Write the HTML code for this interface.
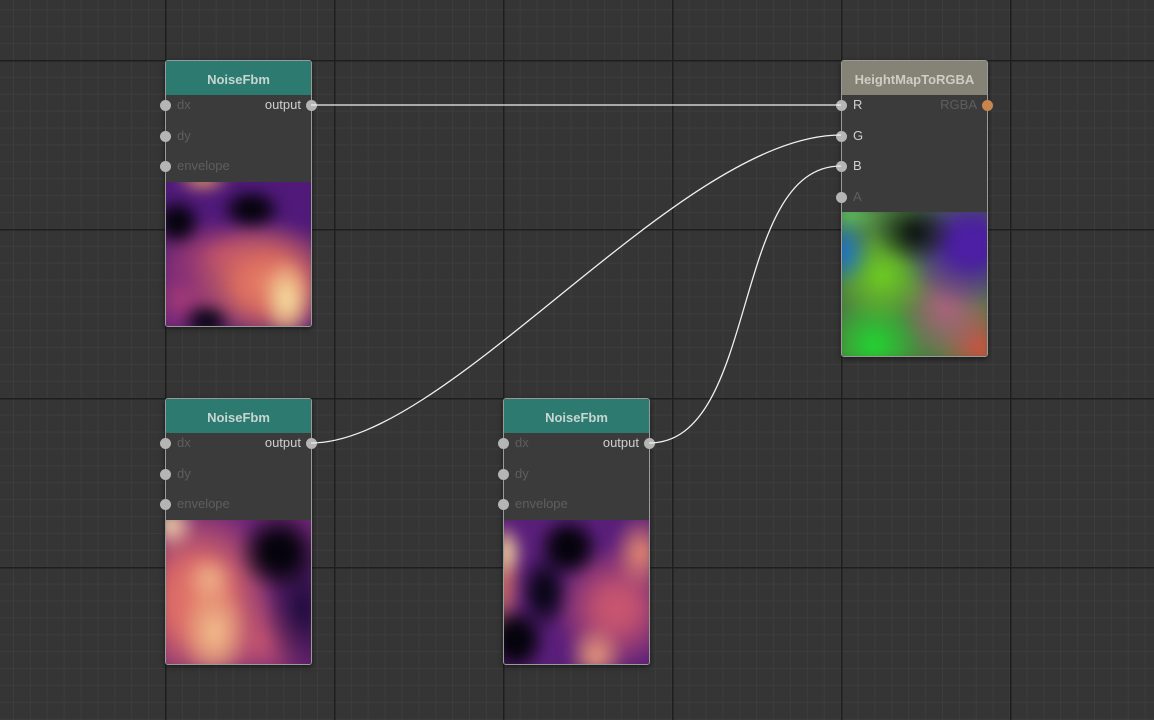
<!DOCTYPE html><html><head><style>
*{margin:0;padding:0;box-sizing:border-box}
body{width:1154px;height:720px;overflow:hidden;background:#353535;font-family:"Liberation Sans",sans-serif;position:relative}
.gmin{position:absolute;inset:0;background-image:linear-gradient(to right,#3d3d3d 1px,transparent 1px),linear-gradient(to bottom,#3d3d3d 1px,transparent 1px);background-size:16.9px 16.9px;background-position:165px 60px}
.gmaj{position:absolute;inset:0;background-image:linear-gradient(to right,#1e1e1e 1.5px,transparent 1.5px),linear-gradient(to bottom,#1e1e1e 1.5px,transparent 1.5px);background-size:169px 169px;background-position:165px 60px}
.node{position:absolute;width:147px;height:267px;border:1px solid #9a9a9a;border-radius:3px;background:#3b3b3b;box-shadow:0 2px 6px rgba(0,0,0,.5)}
.hd{height:34px;background:#2c7a70;color:#c8d6d2;font-weight:bold;font-size:13px;text-align:center;line-height:38px;border-radius:2px 2px 0 0;margin-bottom:-5px;position:relative;z-index:1}
.row{height:30.5px;position:relative;font-size:13px;color:#5e5e5e;line-height:30px;padding-left:11px}
.row .d{position:absolute;left:-6px;top:10px;width:11px;height:11px;border-radius:50%;background:#b5b5b5}
.row .o{position:absolute;right:10px;color:#cfcfcf}
.row .do{position:absolute;right:-6px;top:10px;width:11px;height:11px;border-radius:50%;background:#b5b5b5}
.imgw{position:absolute;left:0;right:0;bottom:0;height:144px;overflow:hidden;border-radius:0 0 2px 2px}
.img{position:absolute;inset:-8px;filter:blur(6px)}
.on{color:#d0d0d0}
</style></head><body>
<div class="gmin"></div><div class="gmaj"></div>

<div class="node" style="left:165px;top:60px">
<div class="hd">NoiseFbm</div>
<div class="row"><span class="d"></span>dx<span class="o">output</span><span class="do"></span></div>
<div class="row"><span class="d"></span>dy</div>
<div class="row"><span class="d"></span>envelope</div>
<div class="imgw"><div class="img" style="background:
radial-gradient(ellipse 16% 16% at 12% 30%,#05030c 0,#05030c 35%,transparent 100%),
radial-gradient(ellipse 20% 14% at 58% 22%,#05030c 0,#05030c 35%,transparent 100%),
radial-gradient(ellipse 16% 12% at 30% 92%,#0a0618 0,#0a0618 30%,transparent 100%),
radial-gradient(ellipse 16% 26% at 80% 78%,#f5dca4 0,#f0c890 30%,transparent 100%),
radial-gradient(ellipse 50% 40% at 68% 68%,#e88468 0,#d86a60 40%,transparent 100%),
radial-gradient(ellipse 50% 22% at 40% 50%,#b8486e 0,transparent 100%),
radial-gradient(ellipse 18% 10% at 28% 3%,#f3a56a 0,transparent 100%),
radial-gradient(ellipse 30% 30% at 15% 78%,#a83c76 0,transparent 100%),
#50197a"></div></div>
</div>

<div class="node" style="left:165px;top:398px">
<div class="hd">NoiseFbm</div>
<div class="row"><span class="d"></span>dx<span class="o">output</span><span class="do"></span></div>
<div class="row"><span class="d"></span>dy</div>
<div class="row"><span class="d"></span>envelope</div>
<div class="imgw"><div class="img" style="background:
radial-gradient(ellipse 26% 26% at 75% 25%,#05030c 0,#05030c 35%,transparent 100%),
radial-gradient(ellipse 25% 45% at 90% 60%,#1a0a3a 0,transparent 100%),
radial-gradient(ellipse 16% 16% at 8% 8%,#f7dcaa 0,transparent 100%),
radial-gradient(ellipse 16% 16% at 32% 42%,#f0b48a 0,transparent 100%),
radial-gradient(ellipse 22% 32% at 35% 75%,#f2bc90 0,#eaa880 30%,transparent 100%),
radial-gradient(ellipse 50% 60% at 25% 55%,#e47868 0,#d86868 40%,transparent 100%),
radial-gradient(ellipse 30% 30% at 65% 82%,#c05070 0,transparent 100%),
#70257a"></div></div>
</div>

<div class="node" style="left:503px;top:398px">
<div class="hd">NoiseFbm</div>
<div class="row"><span class="d"></span>dx<span class="o">output</span><span class="do"></span></div>
<div class="row"><span class="d"></span>dy</div>
<div class="row"><span class="d"></span>envelope</div>
<div class="imgw"><div class="img" style="background:
radial-gradient(ellipse 20% 22% at 12% 80%,#05030c 0,#05030c 40%,transparent 100%),
radial-gradient(ellipse 20% 20% at 45% 22%,#05030c 0,#05030c 40%,transparent 100%),
radial-gradient(ellipse 16% 25% at 30% 50%,#0a0618 0,#0a0618 30%,transparent 100%),
radial-gradient(ellipse 12% 18% at 6% 25%,#f7dca6 0,transparent 100%),
radial-gradient(ellipse 18% 24% at 90% 25%,#f09070 0,transparent 100%),
radial-gradient(ellipse 18% 20% at 62% 90%,#f0a07a 0,transparent 100%),
radial-gradient(ellipse 40% 40% at 75% 60%,#c85870 0,#c05070 30%,transparent 100%),
radial-gradient(ellipse 14% 40% at 3% 45%,#e07a60 0,transparent 100%),
#5a1e7a"></div></div>
</div>

<div class="node" style="left:841px;top:60px;height:297px">
<div class="hd" style="background:#858376;color:#cfcdc4">HeightMapToRGBA</div>
<div class="row on"><span class="d"></span>R<span class="o" style="color:#5e5e5e">RGBA</span><span class="do" style="background:#c8864e"></span></div>
<div class="row on"><span class="d"></span>G</div>
<div class="row on"><span class="d"></span>B</div>
<div class="row"><span class="d"></span>A</div>
<div class="imgw"><div class="img" style="background:
radial-gradient(ellipse 18% 22% at 5% 30%,#1870d8 0,transparent 100%),
radial-gradient(ellipse 25% 20% at 50% 18%,#050a05 0,transparent 100%),
radial-gradient(ellipse 45% 40% at 85% 25%,#5020a8 0,#4a1ea0 30%,transparent 100%),
radial-gradient(ellipse 30% 30% at 30% 45%,#70d020 0,transparent 100%),
radial-gradient(ellipse 30% 30% at 25% 88%,#20d830 0,transparent 100%),
radial-gradient(ellipse 30% 35% at 70% 65%,#b06080 0,transparent 100%),
radial-gradient(ellipse 25% 30% at 90% 90%,#d05040 0,transparent 100%),
radial-gradient(ellipse 20% 15% at 10% 5%,#60c060 0,transparent 100%),
#4e8040"></div></div>
</div>

<svg width="1154" height="720" style="position:absolute;left:0;top:0" fill="none" stroke="#f0f0f0" stroke-width="1.3">
<path d="M311 105 L841 105"/>
<path d="M311 443 C450 443 680 135 841 135"/>
<path d="M649 443 C760 443 730 166 841 166"/>
</svg>
</body></html>
